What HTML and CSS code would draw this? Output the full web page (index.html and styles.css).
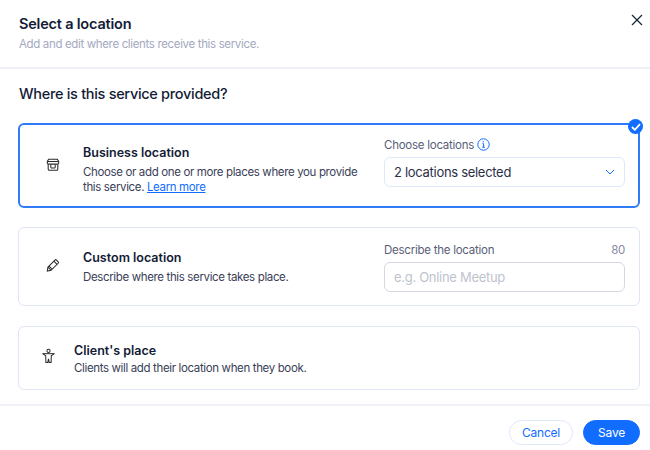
FILE: index.html
```html
<!DOCTYPE html>
<html lang="en">
<head>
<meta charset="utf-8">
<title>Select a location</title>
<link rel="stylesheet" href="styles.css">
</head>
<body>
<div class="modal">
  <header class="header">
    <div>
      <h1 class="title">Select a location</h1>
      <p class="subtitle">Add and edit where clients receive this service.</p>
    </div>
    <svg class="close" width="12" height="12" viewBox="0 0 12 12"><path d="M1 1l10 10M11 1L1 11" stroke="#162d3d" stroke-width="1.3" fill="none"/></svg>
  </header>
  <main class="body">
    <h2 class="question">Where is this service provided?</h2>
    <div class="cards">
      <section class="card card-selected">
        <svg class="icon" width="14" height="14" viewBox="0 0 16 16" fill="none" stroke="#2b2b2b" stroke-width="1.2"><path d="M3 1.500h10l1.500 2.500v1.600c0 .8-.7 1.400-1.500 1.400H3C2.200 7 1.500 6.400 1.500 5.600V4z"/><path d="M1.500 4h13"/><path d="M2.500 7v5.500c0 1 .5 1.500 1.300 1.500h8.400c.8 0 1.300-.5 1.300-1.500V7"/><path d="M5.500 7.500v3c0 .6.400 1 1 1h3c.6 0 1-.4 1-1v-3"/></svg>
        <div class="text">
          <h3 class="card-title">Business location</h3>
          <p class="card-desc">Choose or add one or more places where you provide this service. <a class="link" href="#">Learn more</a></p>
        </div>
        <div class="field">
          <div class="label-row">
            <span class="label">Choose locations
              <svg class="info" width="13" height="13" viewBox="0 0 13 13" fill="none" stroke="#116dff"><circle cx="6.500" cy="6.500" r="5.700"/><path d="M5.300 5.700h1.300v3.300M5.200 9.200h2.700"/><path d="M6.300 3.300v1" stroke-width="1.300"/></svg>
            </span>
          </div>
          <div class="select">
            <span>2 locations selected</span>
            <svg width="10" height="6" viewBox="0 0 10 6" fill="none" stroke="#116dff"><path d="M1 1l4 4 4-4"/></svg>
          </div>
        </div>
        <span class="badge"><svg width="10" height="8" viewBox="0 0 10 8" fill="none" stroke="#fff" stroke-width="1.800"><path d="M1 4l2.800 2.800L9 1.200"/></svg></span>
      </section>
      <section class="card card-custom">
        <svg class="icon" width="14" height="14" viewBox="0 0 16 16" fill="none" stroke="#2b2b2b" stroke-width="1.200"><path d="M2.200 10.500l8-8.200c.5-.5 1.200-.5 1.700 0l2 2c.5.500.5 1.200 0 1.700l-8.100 8L1.500 15z"/><path d="M9 3.600l3.600 3.600M2.200 10.500l3.500 3.500M3.500 9.300l3.100 3.100"/></svg>
        <div class="text">
          <h3 class="card-title">Custom location</h3>
          <p class="card-desc">Describe where this service takes place.</p>
        </div>
        <div class="field">
          <div class="label-row">
            <span class="label">Describe the location</span>
            <span class="count">80</span>
          </div>
          <input class="input" type="text" placeholder="e.g. Online Meetup">
        </div>
      </section>
      <section class="card card-client">
        <svg class="icon-client" width="13" height="16" viewBox="0 0 14 16" fill="none" stroke="#2b2b2b" stroke-width="1.100"><circle cx="7" cy="2.500" r="1.700"/><path d="M.5 5.500h13"/><path d="M.8 5.500l3.200 2.200.2 7.300h2L7 11l.8 4h2l.2-7.300 3.200-2.200"/></svg>
        <div class="text">
          <h3 class="card-title">Client's place</h3>
          <p class="card-desc">Clients will add their location when they book.</p>
        </div>
      </section>
    </div>
  </main>
  <footer class="footer">
    <button class="btn btn-cancel" type="button">Cancel</button>
    <button class="btn btn-save" type="button">Save</button>
  </footer>
</div>
</body>
</html>
```
FILE: styles.css
```css
* { box-sizing: border-box; }
html, body { margin: 0; padding: 0; }
body {
  width: 650px;
  height: 450px;
  overflow: hidden;
  background: #fff;
  font-family: Inter, "Liberation Sans", sans-serif;
  color: #162d3d;
}
.modal { display: flex; flex-direction: column; height: 450px; }
.header {
  display: flex;
  justify-content: space-between;
  align-items: flex-start;
  height: 69px;
  padding: 15px 7px 0 19px;
  border-bottom: 2px solid #eff1f7;
}
.title { margin: 0; font-size: 14.500px; line-height: 18px; font-weight: 600; letter-spacing: -0.2px; color: #131b36; }
.subtitle { margin: 3px 0 0; font-size: 11.500px; line-height: 16px; letter-spacing: -0.35px; color: #a3a9c0; }
.close { margin-top: -1px; }
.body { padding: 15px 10px 0 18px; flex: 1; }
.question { margin: 0 0 19px 1px; font-size: 14.500px; line-height: 20px; font-weight: 500; letter-spacing: -0.3px; color: #131b36; }
.cards { display: flex; flex-direction: column; gap: 19px; }
.card {
  position: relative;
  display: flex;
  align-items: center;
  border: 1px solid #dfe5f5;
  border-radius: 6px;
  padding: 0 14px 0 26px;
}
.card-selected { height: 85px; border: 2px solid #2f7cf6; padding: 0 13px 0 25px; }
.card-custom { height: 79px; margin-bottom: 1px; }
.card-client { height: 64px; padding-left: 23px; }
.icon { flex: none; margin: 0 23px 0 1px; }
.card-selected .icon { margin-top: -2px; }
.card-custom .icon { margin-top: -4px; }
.icon-client { flex: none; margin: -4px 19px 0 0; }
.text { flex: 1; min-width: 0; padding-right: 20px; }
.card-selected .text { margin-top: 8px; }
.card-custom .text { margin-top: 2px; }
.card-client .text { margin-top: 3px; }
.card-title { margin: 0 0 4px; font-size: 12.500px; line-height: 16px; font-weight: 600; color: #131b36; }
.card-desc { margin: 0; font-size: 11.500px; line-height: 15px; letter-spacing: -0.36px; color: #3b4057; }
.card-client .card-title { margin-bottom: 2px; }
.link { color: #116dff; }
.field { flex: none; width: 241px; }
.card-selected .field { margin-bottom: 8px; }
.card-custom .field { margin-top: 1px; }
.label-row { display: flex; justify-content: space-between; align-items: center; height: 16px; margin-bottom: 4px; font-size: 11.500px; letter-spacing: -0.25px; color: #585e78; }
.label { display: inline-flex; align-items: center; gap: 3px; }
.count { color: #868aa5; }
.select, .input {
  display: flex;
  align-items: center;
  justify-content: space-between;
  width: 100%;
  height: 30px;
  padding: 0 9px;
  border-radius: 6px;
  font-family: inherit;
  font-size: 13px;
  letter-spacing: -0.3px;
  color: #2b3048;
  outline: none;
}
.select { border: 1px solid #dfe8fb; }
.input { border: 1px solid #d5d8e0; background: #fff; }
.input::placeholder { color: #c0c3ce; opacity: 1; }
.badge {
  position: absolute;
  top: -6px;
  right: -5px;
  display: flex;
  align-items: center;
  justify-content: center;
  width: 15px;
  height: 15px;
  border-radius: 50%;
  background: #116dff;
}
.footer {
  display: flex;
  justify-content: flex-end;
  gap: 10px;
  height: 46px;
  padding: 14px 10px 0 0;
  border-top: 2px solid #eff1f7;
}
.btn {
  height: 25px;
  padding: 0;
  border-radius: 13px;
  font-family: inherit;
  font-size: 12px;
  letter-spacing: -0.2px;
  font-weight: 400;
}
.btn-cancel { width: 64px; background: #fff; border: 1px solid #dfe8fb; color: #116dff; }
.btn-save { width: 57px; background: #116dff; border: 1px solid #116dff; color: #fff; }
```
